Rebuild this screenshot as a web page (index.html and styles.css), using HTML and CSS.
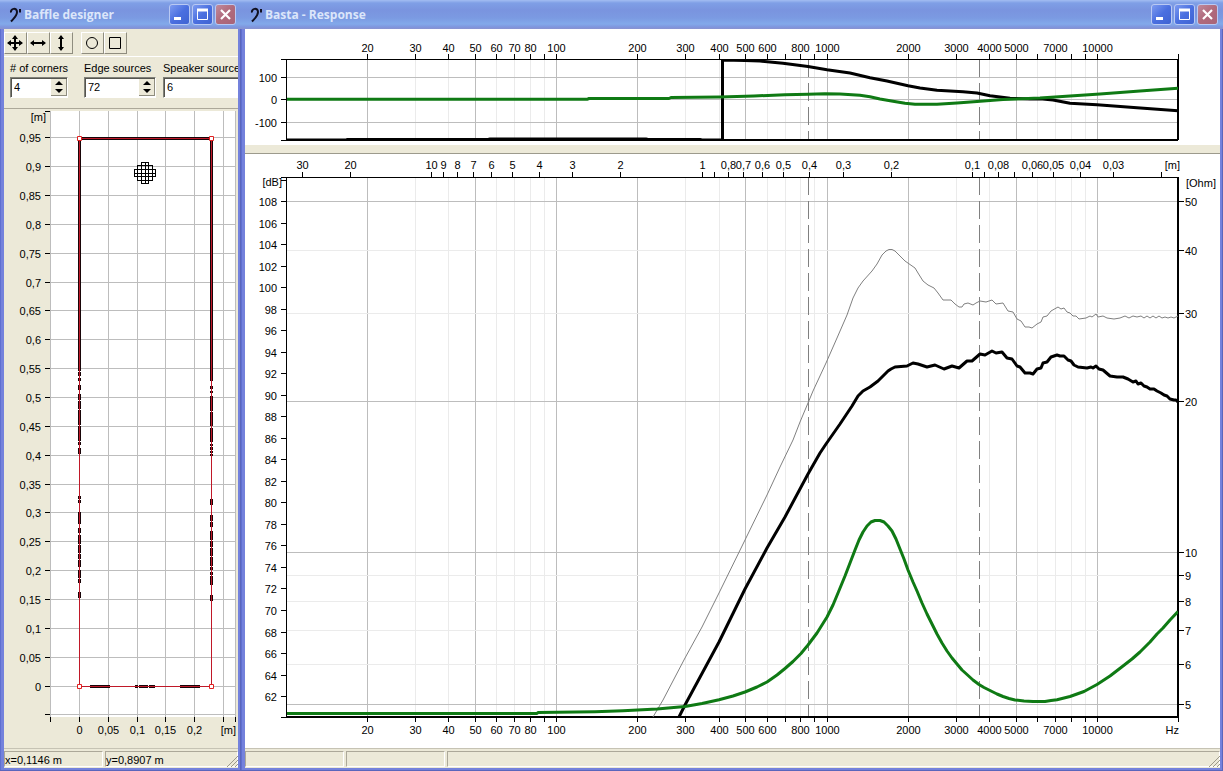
FILE: index.html
```html
<!DOCTYPE html>
<html lang="en">
<head>
<meta charset="utf-8">
<meta name="viewport" content="width=device-width, initial-scale=1.0">
<title>Basta</title>
<link rel="stylesheet" href="styles.css">
</head>
<body>

<section class="window designer">
  <header class="titlebar">
    <svg class="clef" width="14" height="16" viewBox="0 0 14 16"><path d="M3 5.500C2 1.500 9 0 9 5C9 9 6 11 3 14.500"/><path d="M12 2V5.500"/></svg>
    <h1>Baffle designer</h1>
    <button class="winbtn" aria-label="Minimize"><svg viewBox="0 0 19 19"><path d="M4 13.500H11" stroke-width="3"/></svg></button>
    <button class="winbtn" aria-label="Maximize"><svg viewBox="0 0 19 19"><path d="M4.500 14.500V5.500H14.500V14.500Z"/><path d="M4 5H15" stroke-width="3"/></svg></button>
    <button class="winbtn close" aria-label="Close"><svg viewBox="0 0 19 19"><path d="M5 5L14 14M14 5L5 14" stroke-width="2.2"/></svg></button>
  </header>
  <div class="client">
    <div class="toolbar">
      <button class="tool" aria-label="Move"><svg viewBox="0 0 20 20"><path d="M3 10H17M10 3V17"/><path class="head" d="M2 10L6 7V13ZM18 10L14 7V13ZM10 2L7 6H13ZM10 18L7 14H13Z"/></svg></button>
      <button class="tool" aria-label="Move horizontally"><svg viewBox="0 0 20 20"><path d="M3 10H17"/><path class="head" d="M2 10L6 7V13ZM18 10L14 7V13Z"/></svg></button>
      <button class="tool" aria-label="Move vertically"><svg viewBox="0 0 20 20"><path d="M10 3V17"/><path class="head" d="M10 2L7 6H13ZM10 18L7 14H13Z"/></svg></button>
      <span class="gap"></span>
      <button class="tool thin" aria-label="Circle"><svg viewBox="0 0 20 20"><circle cx="10" cy="10" r="5.5"/></svg></button>
      <button class="tool thin" aria-label="Rectangle"><svg viewBox="0 0 20 20"><path d="M4.500 4.500H15.500V15.500H4.500Z"/></svg></button>
    </div>
    <div class="fields">
      <div class="field">
        <label for="corners"># of corners</label>
        <div class="spin short">
          <input id="corners" type="text" value="4">
          <div class="updown">
            <button aria-label="More corners"><svg viewBox="0 0 8 4"><path d="M0 4L4 0L8 4Z"/></svg></button>
            <button aria-label="Fewer corners"><svg viewBox="0 0 8 4"><path d="M0 0L4 4L8 0Z"/></svg></button>
          </div>
        </div>
      </div>
      <div class="field">
        <label for="edges">Edge sources</label>
        <div class="spin">
          <input id="edges" type="text" value="72">
          <div class="updown">
            <button aria-label="More edge sources"><svg viewBox="0 0 8 4"><path d="M0 4L4 0L8 4Z"/></svg></button>
            <button aria-label="Fewer edge sources"><svg viewBox="0 0 8 4"><path d="M0 0L4 4L8 0Z"/></svg></button>
          </div>
        </div>
      </div>
      <div class="field">
        <label for="speakers">Speaker source</label>
        <div class="spin wide">
          <input id="speakers" type="text" value="6">
        </div>
      </div>
    </div>
    <div class="chart">
      <svg id="baffle">
        <g class="axes"></g>
        <svg class="plot" viewBox="50 111 186 606" preserveAspectRatio="none">
          <!-- edge sources -->
          <path class="src" d="M79 138.500H212M79.500 138V371M79.500 372V376M79.500 378V381M79.500 385V390M79.500 394V400M79.500 401V409M79.500 410V425M79.500 426V441M79.500 442V445M79.500 448V454M79.500 496V499M79.500 500V503M79.500 512V524M79.500 528V533M79.500 535V544M79.500 545V553M79.500 554V559M79.500 560V567M79.500 570V578M79.500 579V583M79.500 592V598
            M211.500 138V381M211.500 386V389M211.500 391V393M211.500 396V411M211.500 412V426M211.500 428V442M211.500 444V446M211.500 447V450M211.500 451V453M211.500 454V456M211.500 499V505M211.500 515V521M211.500 522V527M211.500 531V540M211.500 541V547M211.500 548V556M211.500 557V566M211.500 567V570M211.500 572V575M211.500 576V585M211.500 595V601
            M90 686.500H110M135 686.500H138M139 686.500H148M149 686.500H155M180 686.500H200"/>
          <rect class="edge" x="79" y="138" width="133" height="1"/>
          <rect class="edge" x="79" y="686" width="133" height="1"/>
          <rect class="edge" x="79" y="138" width="1" height="549"/>
          <rect class="edge" x="211" y="138" width="1" height="549"/>
          <path class="corner" d="M77.500 136.500H81.500V140.500H77.500ZM209.500 136.500H213.500V140.500H209.500ZM209.500 684.500H213.500V688.500H209.500ZM77.500 684.500H81.500V688.500H77.500Z"/>
          <!-- speaker -->
          <path class="speaker" d="M141.500 162.500H148.500M137.500 165.500H152.500M134.500 169.500H155.500M134.500 173.500H155.500M134.500 176.500H155.500M137.500 180.500H152.500M141.500 183.500H148.500M134.500 169V177M137.500 165V181M141.500 162V184M145.500 162V184M148.500 162V184M152.500 165V181M155.500 169V177"/>
        </svg>
      </svg>
    </div>
    <footer class="status">
      <span class="panel small">x=0,1146 m</span>
      <span class="panel">y=0,8907 m</span>
      <svg class="grip" viewBox="0 0 12 12"><path d="M1 12L12 1M5 12L12 5M9 12L12 9"/></svg>
    </footer>
  </div>
</section>

<section class="window response">
  <header class="titlebar">
    <svg class="clef" width="14" height="16" viewBox="0 0 14 16"><path d="M3 5.500C2 1.500 9 0 9 5C9 9 6 11 3 14.500"/><path d="M12 2V5.500"/></svg>
    <h1>Basta - Response</h1>
    <button class="winbtn" aria-label="Minimize"><svg viewBox="0 0 19 19"><path d="M4 13.500H11" stroke-width="3"/></svg></button>
    <button class="winbtn" aria-label="Maximize"><svg viewBox="0 0 19 19"><path d="M4.500 14.500V5.500H14.500V14.500Z"/><path d="M4 5H15" stroke-width="3"/></svg></button>
    <button class="winbtn close" aria-label="Close"><svg viewBox="0 0 19 19"><path d="M5 5L14 14M14 5L5 14" stroke-width="2.2"/></svg></button>
  </header>
  <div class="client">
    <div class="chart phase">
      <svg id="phase">
        <g class="axes"></g>
        <svg class="plot" viewBox="287 59 891 81" preserveAspectRatio="none">
          <path class="spl" d="M287 140H346L347 139.500H488L490 139H646L648 139.500H700L702 140H722.500V60L745 60.500L760 61L783 63.300L808 66.500L827 69.700L850 73L870 77.700L887 81L908 85.700L920 88L937 90.300L963 91.700L977 93L990 95.700L1010 98.300L1030 99L1040 98.800L1053 100L1070 103.300L1097 104.700L1137 107.700L1178 110.700"/>
          <path class="imp" d="M287 99.300H587L589 98.500H669L671 97.500L720 97L754 96L785 94.800L808 94.300L825 93.700L840 94L860 95.300L870 96.700L880 99L893 101.300L905 103.300L915 104.300H937L957 103L977 101.500L1003 99.500L1040 98L1070 96L1100 94L1140 91L1178 88.300"/>
        </svg>
      </svg>
    </div>
    <div class="splitter"></div>
    <div class="chart mag">
      <svg id="mag">
        <g class="axes"></g>
        <svg class="plot" viewBox="287 177 891 540" preserveAspectRatio="none">
          <polyline class="raw" points="653,717 663,700 685,658 702,627 719,593 745,540 767,495 780,467 793,440 800,422 808,403 813,391 826,363 837,338 847,315 853,298 858,288 863,281 872,271 877,264 882,255 886,251 889,249.500 892,249.500 895,251 905,261 915,268 918,273 923,281 928,285 934,288 938,293 943,300 951,300 955,304 959,307 962,307 964,304 968,303 973,305 976,303 980,301 986,302 992,300 996,304 1003,303 1008,311 1013,312 1017,319 1021,321 1025,327 1029,327 1032,328 1037,324 1041,322 1043,317 1047,316 1051,311 1058,307 1061,309 1064,308 1067,312 1070,313 1073,316 1076,316 1079,319 1086,318 1090,316 1092,317 1096,314 1098,317 1103,316 1107,318 1114,319 1120,318 1125,316 1129,318 1133,316 1137,317 1141,316 1144,318 1147,316 1150,318 1153,316 1156,318 1159,316 1162,318 1165,317 1168,318 1171,317 1174,318 1178,316"/>
          <polyline class="spl" points="679,717 685,705 719,642 745,589 767,548 785,517 808,474 820,453 826,444 840,424 852,406 858,396 863,391 870,387 878,381 888,371 891,369 895,367 907,366 913,363 918,364 927,367 935,365 944,369 952,366 959,368 967,361 972,361 980,354 985,355 992,351 996,353 1002,352 1007,358 1012,359 1017,366 1020,367 1025,373 1030,373 1033,374 1037,369 1041,368 1043,363 1047,362 1051,357 1057,355 1060,356 1064,356 1068,360 1071,361 1074,365 1078,367 1087,368 1091,367 1093,368 1096,366 1099,369 1103,370 1110,376 1117,377 1123,377 1128,379 1133,382 1136,381 1138,384 1141,383 1144,386 1147,387 1150,389 1154,389 1157,391 1161,393 1164,395 1167,396 1170,399 1174,400 1176,400 1178,402"/>
          <polyline class="imp" points="287,713.500 537,713.500 538,712.500 595,711.700 623,710.700 657,709 685,706.500 702,703.500 719,699.700 733,696 745,692 757,687 767,682 777,675 785,668.500 793,661.500 801,653.500 808,645 817,633 827,617 833,605 838,593 845,576 850,563 855,550 859,540 863,532 867,526 871,522 875,520.500 880,520.500 884,522 888,526 892,531 896,539 900,549 904,559 908,570 913,582 917,591 922,603 927,614 932,624 937,634 942,643 947,651 952,658 957,664 962,670 967,674.500 973,680 979,684.500 984,687.500 990,690.500 997,694 1003,696.500 1009,698.500 1015,700 1024,701 1033,701.500 1045,701.500 1051,700.500 1057,699.700 1070,696.500 1084,691.500 1097,684.500 1110,676 1123,666 1132,659 1140,652 1150,642 1157,634 1163,628 1170,620 1178,611.500"/>
        </svg>
      </svg>
    </div>
    <footer class="status">
      <span class="panel small"></span>
      <span class="panel small"></span>
      <span class="panel"></span>
      <svg class="grip" viewBox="0 0 12 12"><path d="M1 12L12 1M5 12L12 5M9 12L12 9"/></svg>
    </footer>
  </div>
</section>

<script src="charts.js"></script>
</body>
</html>
```
FILE: styles.css
```css
* {box-sizing: border-box;}
body {
  margin: 0;
  height: 100vh;
  display: flex;
  overflow: hidden;
  background: #7a88dc;
  color: #000;
  font-family: "Liberation Sans", Arial, sans-serif;
  font-size: 11px;
}
button, input {font: inherit; color: inherit;}

/* windows */
.window {
  display: flex;
  flex-direction: column;
  min-width: 0;
  padding: 0 3px 3px 4px;
  background: #7482dc;
  box-shadow: inset -1px -1px #5a66bc, inset 1px 0 #5f6fd0;
}
.designer {width: 241px; flex: none;}
.response {flex: 1;}
.client {
  flex: 1;
  min-height: 0;
  display: flex;
  flex-direction: column;
  overflow: hidden;
  background: #ece9d8;
}
.titlebar {
  display: flex;
  align-items: center;
  gap: 2px;
  height: 29px;
  margin: 0 -3px 0 -4px;
  padding: 0 5px 0 8px;
  background: linear-gradient(#a3bdf2 0, #7f9fe6 3px, #7a94df 10px, #7b9ae2 18px, #82a9ea 24px, #7f96de 27px, #8993cf 29px);
}
.titlebar h1 {
  flex: 1;
  margin: 0;
  font: bold 12px "Open Sans", "Noto Sans", sans-serif;
  color: #dce6fa;
  white-space: nowrap;
}
.clef {fill: none; stroke: #101020; stroke-width: 2;}
.winbtn {
  width: 21px;
  height: 21px;
  padding: 0;
  border: 1px solid #b9c9f3;
  border-radius: 3px;
  background: linear-gradient(135deg, #7d9bf0, #4a6fe0 50%, #3f63d2);
}
.winbtn svg {display: block; width: 19px; height: 19px; fill: none; stroke: #fff;}
.close {background: linear-gradient(135deg, #c08a9c, #b06a7c 50%, #a86478);}

/* toolbar */
.toolbar {
  display: flex;
  height: 28px;
  padding-top: 3px;
  border-bottom: 1px solid #fff;
}
.tool {
  width: 23px;
  height: 22px;
  padding: 0;
  border: 1px solid;
  border-color: #fff #8f8d7f #8f8d7f #fff;
  background: #ece9d8;
}
.tool svg {display: block; width: 20px; height: 20px; fill: none; stroke: #000; stroke-width: 2;}
.tool .head {fill: #000; stroke: none;}
.tool.thin svg {stroke-width: 1;}
.gap {width: 8px;}
.fields {
  display: grid;
  grid-template-columns: 74px 79px 1fr;
  height: 52px;
  padding: 4px 0 0 6px;
  border-bottom: 1px solid #aca899;
}
.field {display: flex; flex-direction: column; align-items: flex-start; gap: 2px; min-width: 0;}
.field label {line-height: 14px; white-space: nowrap;}
.spin {
  display: flex;
  width: 72px;
  height: 21px;
  border: 1px solid;
  border-color: #808078 #fff #fff #808078;
  box-shadow: inset 1px 1px #55554f;
  background: #fff;
}
.spin.short {width: 58px;}
.spin.wide {width: 90px;}
.spin input {
  flex: 1;
  width: 0;
  padding: 0 0 2px 3px;
  border: 0;
  background: none;
  outline: 0;
}
.updown {width: 16px; display: flex; flex-direction: column; padding: 1px 0;}
.updown button {
  flex: 1;
  display: flex;
  align-items: center;
  justify-content: center;
  padding: 0;
  border: 0 solid #8f8d7f;
  border-right-width: 1px;
  background: #ece9d8;
}
.updown button:last-child {border-bottom-width: 1px;}
.updown svg {width: 8px; height: 4px;}

/* charts */
.chart {flex: 1; min-height: 0;}
.chart > svg {display: block; width: 100%; height: 100%;}
.response .chart {background: #fff;}
.response .phase {flex: none; height: 116px;}
.splitter {height: 9px; background: #ece9d8; border-bottom: 1px solid #9c9a8c;}
.chart text {fill: #000;}
.chart line, .chart rect {shape-rendering: crispEdges;}
.paper {fill: #fff;}
.major {stroke: #bdbdbd;}
.minor {stroke: #ebebeb;}
.tick, .frame {stroke: #000;}
.marker {stroke: #808080; stroke-dasharray: 18 6;}
.frame {fill: none;}
.heavy {stroke: #000; stroke-width: 2;}
.plot path, .plot polyline {fill: none; vector-effect: non-scaling-stroke; stroke-linejoin: round;}
.plot .spl {stroke: #000; stroke-width: 3;}
.phase .plot path {stroke-width: 3;}
.plot .raw {stroke: #808080;}
.plot .imp {stroke: #0f7a14; stroke-width: 3;}
.plot .src {stroke: #180408; stroke-width: 3;}
.plot .edge {fill: #c01828;}
.plot .corner {fill: #fff; stroke: #e02020;}
.plot .speaker {stroke: #000;}

/* status bar */
.status {
  position: relative;
  display: flex;
  gap: 2px;
  height: 20px;
  padding: 2px 0 1px;
  border-top: 1px solid #c6c3b4;
}
.panel {
  flex: 1;
  height: 16px;
  border: 1px solid;
  border-color: #aca899 #fff #fff #aca899;
  line-height: 16px;
  white-space: nowrap;
}
.panel.small {flex: none; width: 99px;}
.grip {position: absolute; right: 0; bottom: 1px; width: 12px; height: 12px; stroke: #9c998a;}
```
FILE: charts.js
```js
var NS = "http://www.w3.org/2000/svg";

function add(g, name, attrs, text) {
    var el = document.createElementNS(NS, name);
    for (var k in attrs) el.setAttribute(k, attrs[k]);
    if (text !== undefined) el.textContent = text;
    g.appendChild(el);
}

function line(g, cls, x1, y1, x2, y2) {
    add(g, "line", {"class": cls, x1: x1, y1: y1, x2: x2, y2: y2});
}

function label(g, x, y, anchor, text) {
    add(g, "text", {x: x, y: y, "text-anchor": anchor}, text);
}

// snap to the middle of a pixel so that 1px lines stay sharp
function snap(v) {
    return Math.floor(v) + 0.5;
}

function comma(v) {
    return String(v).replace(".", ",");
}

// clears the axes and places the plot inside its margins
function prepare(id, left, top, right, bottom) {
    var svg = document.getElementById(id);
    var box = svg.getBoundingClientRect();
    var p = {g: svg.querySelector(".axes"), l: left, t: top, r: box.width - right, b: box.height - bottom};
    p.g.textContent = "";
    var plot = svg.querySelector(".plot");
    plot.setAttribute("x", p.l);
    plot.setAttribute("y", p.t);
    plot.setAttribute("width", p.r - p.l);
    plot.setAttribute("height", p.b - p.t);
    p.fx = function(f) {
        return snap(p.l - 1 + (p.r - p.l + 2) * Math.log(f / 10) / Math.log(2000));
    };
    return p;
}

function freqLines(p, draw) {
    for (var dec = 10; dec <= 10000; dec *= 10) {
        for (var n = 1; n < 10; n++) {
            var f = n * dec;
            if (f > 10 && f < 20000) draw(f, n);
        }
    }
}

function freqGrid(p) {
    freqLines(p, function(f, n) {
        var major = n == 1 || n == 2 || n == 5;
        line(p.g, major ? "major" : "minor", p.fx(f), p.t, p.fx(f), p.b);
    });
}

function freqTicks(p, y, dir) {
    var skip = [90, 700, 900, 6000, 8000, 9000];
    freqLines(p, function(f, n) {
        line(p.g, "tick", p.fx(f), y, p.fx(f), y + 5 * dir);
        if (skip.indexOf(f) < 0) label(p.g, p.fx(f), y + (dir < 0 ? -7 : 17), "middle", f);
    });
    line(p.g, "tick", p.r, y, p.r, y + 5 * dir);
}

function markers(p) {
    [857, 3670].forEach(function(f) {
        line(p.g, "marker", p.fx(f), p.t, p.fx(f), p.b);
    });
}

function frame(p) {
    add(p.g, "rect", {"class": "frame", x: p.l - 0.5, y: p.t + 0.5, width: p.r - p.l, height: p.b - p.t});
    line(p.g, "heavy", p.l - 1, p.b, p.r, p.b);
    line(p.g, "heavy", p.r, p.t, p.r, p.b);
    line(p.g, "tick", p.l - 6, p.t + 0.5, p.l, p.t + 0.5);
    line(p.g, "tick", p.l - 6, p.b + 0.5, p.l, p.b + 0.5);
}

function drawPhase() {
    var p = prepare("phase", 42, 30, 42, 5);
    freqGrid(p);
    [100, 0, -100].forEach(function(deg) {
        var y = snap(p.t + (p.b - p.t) * (180 - deg) / 360);
        line(p.g, "major", p.l, y, p.r, y);
        line(p.g, "tick", p.l - 6, y, p.l, y);
        label(p.g, p.l - 10, y + 4, "end", deg);
    });
    markers(p);
    frame(p);
    freqTicks(p, p.t, -1);
}

function drawMag() {
    var p = prepare("mag", 42, 23, 42, 31);
    var h = p.b - p.t;
    freqGrid(p);
    [50, 40, 30, 20, 10, 9, 8, 7, 6, 5].forEach(function(ohm) {
        var y = snap(p.t + h * 0.976 - h * 0.93 * Math.log(ohm / 5) / Math.LN10);
        var major = [50, 20, 10, 5].indexOf(ohm) >= 0;
        line(p.g, major ? "major" : "minor", p.l, y, p.r, y);
        line(p.g, "tick", p.r, y, p.r + 6, y);
        label(p.g, p.r + 7, y + 4, "start", ohm);
    });
    for (var db = 62; db <= 110; db += 2) {
        var y = snap(p.t + h * (110.3 - db) / 50.2);
        line(p.g, "tick", p.l - 6, y, p.l, y);
        if (db < 110) label(p.g, p.l - 10, y + 4, "end", db);
    }
    label(p.g, p.l - 5, p.t + 9, "end", "[dB]");
    label(p.g, p.r + 8, p.t + 10, "start", "[Ohm]");

    // wavelength scale on the top edge
    var waves = [30, 20, 10, 9, 8, 7, 6, 5, 4, 3, 2, 1, 0.9, 0.8, 0.7, 0.6, 0.5, 0.4, 0.3, 0.2,
        0.1, 0.09, 0.08, 0.07, 0.06, 0.05, 0.04, 0.03, 0.02];
    waves.forEach(function(w) {
        var x = p.fx(345 / w);
        line(p.g, "tick", x, p.t - 5, x, p.t);
        if ([0.9, 0.09, 0.07, 0.02].indexOf(w) < 0) label(p.g, x, p.t - 8, "middle", comma(w));
    });
    label(p.g, p.r + 2, p.t - 8, "end", "[m]");

    markers(p);
    frame(p);
    freqTicks(p, p.b, 1);
    label(p.g, p.r + 1, p.b + 17, "end", "Hz");
}

function drawBaffle() {
    var p = prepare("baffle", 46, 2, 2, 31);
    var g = p.g, step = (p.b - p.t) / 21, i, v;
    var kx = (p.r - p.l) / 186;
    add(g, "rect", {"class": "paper", x: p.l, y: p.t, width: p.r - p.l, height: p.b - p.t});
    for (i = -1; i < 20; i++) {
        v = snap(p.b - 31 - i * step);
        line(g, "major", p.l, v, p.r, v);
        line(g, "tick", p.l - 5, v, p.l, v);
        if (i >= 0) label(g, p.l - 9, v + 4, "end", comma(i * 5 / 100));
    }
    line(g, "tick", p.l - 5, p.t + 0.5, p.l, p.t + 0.5);
    for (i = -1; i < 6; i++) {
        v = snap(p.l + (29.5 + i * 28.8) * kx);
        line(g, "major", v, p.t, v, p.b);
        line(g, "tick", v, p.b, v, p.b + 5);
        if (i >= 0 && i < 5) label(g, v, p.b + 17, "middle", comma(i * 5 / 100));
    }
    line(g, "major", p.r - 0.5, p.t, p.r - 0.5, p.b);
    line(g, "tick", p.r - 0.5, p.b, p.r - 0.5, p.b + 5);
    label(g, p.r, p.b + 17, "end", "[m]");
    label(g, p.l - 4, p.t + 10, "end", "[m]");
}

function drawAll() {
    drawBaffle();
    drawPhase();
    drawMag();
}

window.onresize = drawAll;
drawAll();
```
